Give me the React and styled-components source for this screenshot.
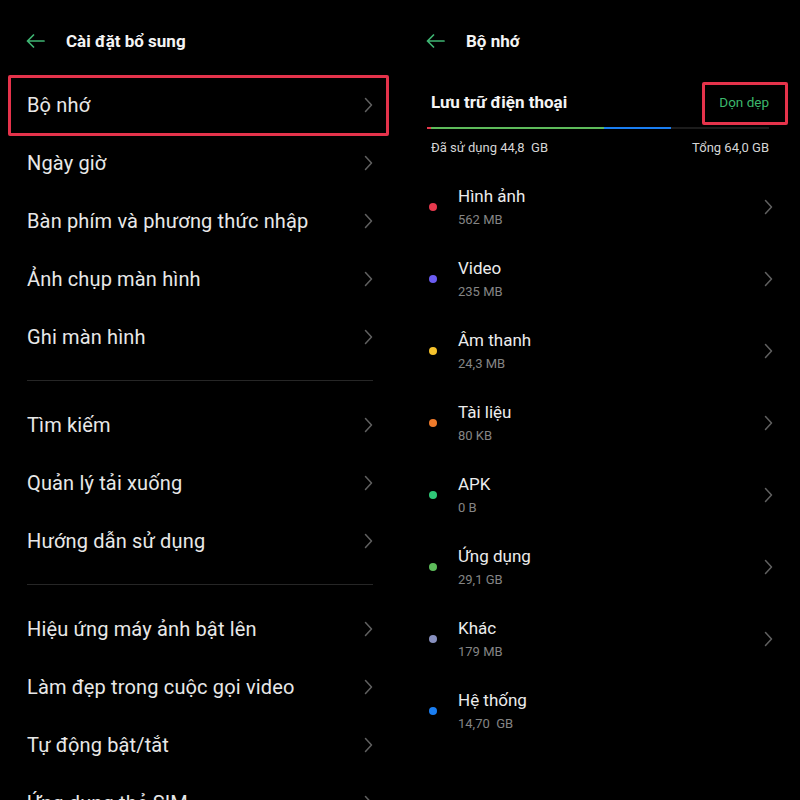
import styled, { createGlobalStyle } from "styled-components";

const GlobalStyle = createGlobalStyle`
  html, body {
    margin: 0;
    height: 800px;
    overflow: hidden;
    background: #000;
  }
  body {
    font-family: Roboto, "Noto Sans", "Liberation Sans", sans-serif;
    -webkit-font-smoothing: antialiased;
  }
`;

const Page = styled.div`
  display: flex;
  width: 800px;
  height: 800px;
  background: #000;
  overflow: hidden;
`;

const Panel = styled.section`
  width: 400px;
  display: flex;
  flex-direction: column;
`;

const Header = styled.header`
  display: flex;
  align-items: center;
  gap: 21px;
  height: 22px;
  padding: 30px 0 24px 26px;
`;

const HeaderTitle = styled.h1`
  margin: 0;
  font-size: 17px;
  font-weight: 700;
  line-height: 22px;
  color: #f4f4f4;
`;

const MenuList = styled.div`
  display: flex;
  flex-direction: column;
`;

const MenuRow = styled.div`
  position: relative;
  display: flex;
  align-items: center;
  justify-content: space-between;
  height: 58px;
  padding: 0 27px;
  flex-shrink: 0;

  ${(p) =>
    p.$marked &&
    `
    &::after {
      content: "";
      position: absolute;
      left: 8px;
      right: 11px;
      top: -1px;
      bottom: -2px;
      border: 3px solid #e5334b;
      border-radius: 2px;
    }
  `}
`;

const MenuLabel = styled.span`
  font-size: 20px;
  letter-spacing: 0.15px;
  color: #e8e8e8;
  white-space: nowrap;
`;

const Divider = styled.div`
  height: 1px;
  margin: 14px 27px 15px;
  background: #262626;
  flex-shrink: 0;
`;

const StorageHead = styled.div`
  display: flex;
  align-items: center;
  justify-content: space-between;
  height: 32px;
  margin-top: 10px;
  padding: 0 31px;
`;

const StorageTitle = styled.h2`
  margin: 0;
  font-size: 17px;
  font-weight: 700;
  color: #f4f4f4;
`;

const CleanButton = styled.span`
  position: relative;
  font-size: 13.5px;
  line-height: 16px;
  color: #3cb96c;

  &::after {
    content: "";
    position: absolute;
    left: -17px;
    right: -19px;
    top: -12px;
    bottom: -15px;
    border: 3px solid #e5334b;
    border-radius: 2px;
  }
`;

const Bar = styled.div`
  display: flex;
  height: 2px;
  margin: 9px 31px 0 27px;
  background: #1c1c1c;
`;

const Segment = styled.div`
  height: 100%;
  background: ${(p) => p.$color};
`;

const UsageLine = styled.div`
  display: flex;
  justify-content: space-between;
  padding: 0 31px;
  margin-top: 10px;
  font-size: 13px;
  line-height: 18px;
  color: #d6d6d6;
  white-space: pre;
`;

const StorageList = styled.div`
  display: flex;
  flex-direction: column;
  margin-top: 14px;
`;

const StorageRow = styled.div`
  display: flex;
  align-items: center;
  height: 72px;
  padding: 0 27px 0 29px;
  flex-shrink: 0;
`;

const Dot = styled.span`
  width: 8px;
  height: 8px;
  border-radius: 50%;
  background: ${(p) => p.$color};
  flex-shrink: 0;
  margin-right: 21px;
`;

const StorageText = styled.div`
  flex: 1;
  display: flex;
  flex-direction: column;
  gap: 2px;
`;

const ItemName = styled.span`
  font-size: 17px;
  line-height: 24px;
  color: #ececec;
`;

const ItemSize = styled.span`
  font-size: 13px;
  line-height: 20px;
  color: #858585;
  white-space: pre;
`;

const Chevron = () => (
  <svg width="9" height="16" viewBox="0 0 9 16" fill="none">
    <polyline
      points="1.5,1.5 7.5,8 1.5,14.5"
      stroke="#606060"
      strokeWidth="1.5"
      strokeLinecap="round"
      strokeLinejoin="round"
    />
  </svg>
);

const BackArrow = () => (
  <svg width="19" height="14" viewBox="0 0 19 14" fill="none">
    <path
      d="M18 7H1.5M7.5 1L1.5 7L7.5 13"
      stroke="#3fb573"
      strokeWidth="1.7"
      strokeLinecap="round"
      strokeLinejoin="round"
    />
  </svg>
);

const menuGroups = [
  ["Bộ nhớ", "Ngày giờ", "Bàn phím và phương thức nhập", "Ảnh chụp màn hình", "Ghi màn hình"],
  ["Tìm kiếm", "Quản lý tải xuống", "Hướng dẫn sử dụng"],
  ["Hiệu ứng máy ảnh bật lên", "Làm đẹp trong cuộc gọi video", "Tự động bật/tắt", "Ứng dụng thẻ SIM"],
];

const storageItems = [
  { name: "Hình ảnh", size: "562 MB", color: "#e6394d" },
  { name: "Video", size: "235 MB", color: "#6b5cf2" },
  { name: "Âm thanh", size: "24,3 MB", color: "#f5c22c" },
  { name: "Tài liệu", size: "80 KB", color: "#f07b2b" },
  { name: "APK", size: "0 B", color: "#2fc878" },
  { name: "Ứng dụng", size: "29,1 GB", color: "#5dbb5a" },
  { name: "Khác", size: "179 MB", color: "#8890bf" },
  { name: "Hệ thống", size: "14,70  GB", color: "#1a7ef2", noArrow: true },
];

const App = () => {
  return (
    <Page>
      <GlobalStyle />
      <Panel>
        <Header>
          <BackArrow />
          <HeaderTitle>Cài đặt bổ sung</HeaderTitle>
        </Header>
        <MenuList>
          {menuGroups.map((group, gi) => (
            <div key={gi}>
              {gi > 0 && <Divider />}
              {group.map((label) => (
                <MenuRow key={label} $marked={label === "Bộ nhớ"}>
                  <MenuLabel>{label}</MenuLabel>
                  <Chevron />
                </MenuRow>
              ))}
            </div>
          ))}
        </MenuList>
      </Panel>

      <Panel>
        <Header>
          <BackArrow />
          <HeaderTitle>Bộ nhớ</HeaderTitle>
        </Header>
        <StorageHead>
          <StorageTitle>Lưu trữ điện thoại</StorageTitle>
          <CleanButton>Dọn dẹp</CleanButton>
        </StorageHead>
        <Bar>
          <Segment $color="#e6394d" style={{ width: "1.2%" }} />
          <Segment $color="#5dbb5a" style={{ width: "50.6%" }} />
          <Segment $color="#1a7ef2" style={{ width: "19.6%" }} />
        </Bar>
        <UsageLine>
          <span>Đã sử dụng 44,8  GB</span>
          <span>Tổng 64,0 GB</span>
        </UsageLine>
        <StorageList>
          {storageItems.map((item) => (
            <StorageRow key={item.name}>
              <Dot $color={item.color} />
              <StorageText>
                <ItemName>{item.name}</ItemName>
                <ItemSize>{item.size}</ItemSize>
              </StorageText>
              {!item.noArrow && <Chevron />}
            </StorageRow>
          ))}
        </StorageList>
      </Panel>
    </Page>
  );
};

export default App;
